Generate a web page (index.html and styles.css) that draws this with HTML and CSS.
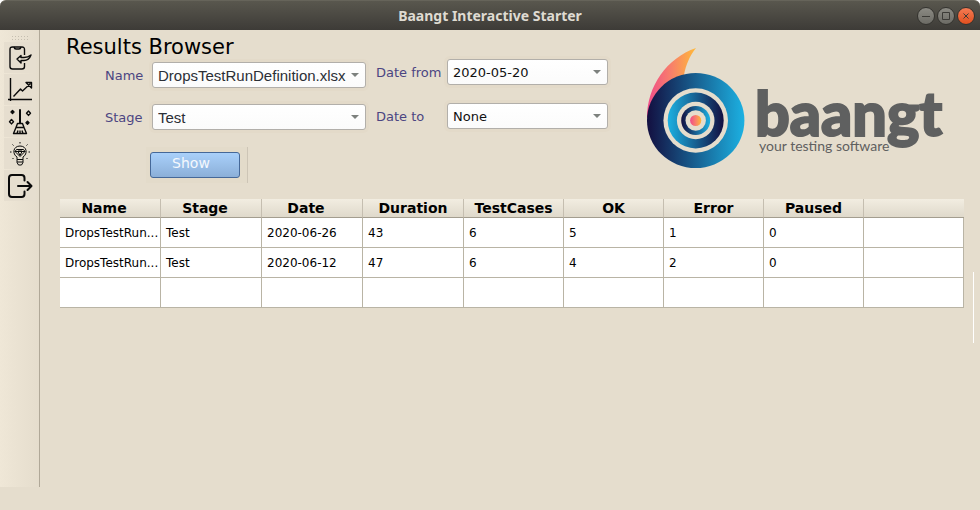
FILE: index.html
```html
<!DOCTYPE html>
<html lang="en">
<head>
<meta charset="utf-8">
<title>Baangt Interactive Starter</title>
<link rel="stylesheet" href="styles.css">
</head>
<body>
<header class="titlebar">
  <h1 class="titlebar-text">Baangt Interactive Starter</h1>
  <div class="window-controls">
    <button class="window-button" type="button" aria-label="Minimize"><svg viewBox="0 0 18 18"><path d="M5 9.500h8"/></svg></button>
    <button class="window-button" type="button" aria-label="Maximize"><svg viewBox="0 0 18 18"><path d="M5.500 5.500h7v7h-7z"/></svg></button>
    <button class="window-button window-close" type="button" aria-label="Close"><svg viewBox="0 0 18 18"><path d="M6.500 6.500l5 5M11.500 6.500l-5 5"/></svg></button>
  </div>
</header>
<div class="workspace">
  <nav class="toolbar" aria-label="Tools">
    <div class="grip"></div>
    <button class="tool" type="button" aria-label="Import">
      <svg viewBox="0 0 24 24"><path d="M16.500 9V3.500Q16.500 1 14 1H4.500Q2 1 2 3.500V20.500Q2 23 4.500 23H14Q16.500 23 16.500 20.500V17"/><path d="M6 1q.5 2 2 2h3q1.500 0 2-2"/><path d="M13 9.500L9 13l4 4v-2.500h3q5 0 7-5.500q-3 2.500-7 2.500h-3z"/></svg>
    </button>
    <button class="tool" type="button" aria-label="Statistics">
      <svg viewBox="0 0 24 24"><path d="M2.500 0v23M0 21.500h24M5.500 18.500l7-7.500 2 2L22.500 5.500M18 4.500h5.500V10z"/></svg>
    </button>
    <button class="tool" type="button" aria-label="Clean up">
      <svg viewBox="0 0 24 24"><path class="thick" d="M12 0v13"/><path d="M9.500 13.500h5l1.500 4H8zM8 17.500L5.500 23.500h13L16 17.500M9 23.500l1-3M12 23.500v-3M15 23.500l-1-3M3.500 9.500l2 2.200-2 2.200-2-2.200zM20.500 1l2 2.200-2 2.200-2-2.200z"/><path class="solid" d="M4.500.5l1.500 1.500-1.500 1.500L3 2zM19.500 11.200l1.500 1.500-1.500 1.500-1.500-1.500z"/></svg>
    </button>
    <button class="tool" type="button" aria-label="Ideas">
      <svg viewBox="0 0 24 24"><path class="thin" d="M9 17.500v-2.500C4 12 5 4 12 4s8 8 3 11v2.500zM9 17.500v3l1.500 2.500h3l1.500-2.500v-3M9 20h6M8.500 7.500h7l1.500 2-5 5-5-5zM7 9.500h10M10 9.500l2 4 2-4-2-2zM12 0v1.500M4.500 2.500l1 1M19.500 2.500l-1 1M2 10h1.500M20.500 10H22M4.500 17l1-1M19.500 17l-1-1"/></svg>
    </button>
    <button class="tool" type="button" aria-label="Exit">
      <svg viewBox="0 0 24 24"><path class="thick" d="M16.500 6.500V4Q16.500 1 13.500 1H4Q1 1 1 4V20Q1 23 4 23h9.500q3 0 3-3V17.500M10 12h13M19.500 8l4 4-4 4"/></svg>
    </button>
  </nav>
  <main class="content">
    <section class="filters">
      <div class="filter-area">
        <h2 class="heading">Results Browser</h2>
        <form class="form">
          <div class="fields fields-main">
            <div class="field"><label for="name">Name</label><span class="picker"><select id="name"><option>DropsTestRunDefinition.xlsx</option></select></span></div>
            <div class="field"><label for="stage">Stage</label><span class="picker"><select id="stage"><option>Test</option></select></span></div>
          </div>
          <div class="fields fields-date">
            <div class="field"><label for="date-from">Date from</label><span class="picker"><select id="date-from"><option>2020-05-20</option></select></span></div>
            <div class="field"><label for="date-to">Date to</label><span class="picker"><select id="date-to"><option>None</option></select></span></div>
          </div>
          <div class="actions"><button class="show" type="button">Show</button></div>
        </form>
      </div>
      <svg class="logo" viewBox="0 0 304 124" role="img" aria-label="baangt, your testing software">
        <defs>
          <linearGradient id="flame"><stop offset="0" stop-color="#ef4b8b"/><stop offset=".5" stop-color="#f8806a"/><stop offset="1" stop-color="#ffba38"/></linearGradient>
          <linearGradient id="ocean"><stop offset="0" stop-color="#130f40"/><stop offset="1" stop-color="#1cb1e2"/></linearGradient>
          <linearGradient id="ocean-back"><stop offset="0" stop-color="#1cb1e2"/><stop offset="1" stop-color="#130f40"/></linearGradient>
        </defs>
        <path fill="url(#flame)" d="M0 70C0 38 20 10 49 0C42 9 39 17 37 27L20 60z"/>
        <ellipse cx="48.700" cy="72.500" rx="48.700" ry="47.500" fill="url(#ocean)"/>
        <circle class="ring" cx="48.700" cy="72.500" r="32.300"/>
        <circle cx="48.700" cy="72.500" r="28" fill="url(#ocean-back)"/>
        <circle class="ring" cx="48.700" cy="72.500" r="18.800"/>
        <circle cx="48.700" cy="72.500" r="14.500" fill="url(#ocean)"/>
        <circle class="ring" cx="48.700" cy="72.500" r="10.200"/>
        <circle cx="48.700" cy="72.500" r="5.600" fill="url(#flame)"/>
        <text class="wordmark" x="108" y="88">baangt</text>
        <text class="tagline" x="112" y="103">your testing software</text>
      </svg>
    </section>
    <section class="results">
      <table class="table">
        <thead>
          <tr><th>Name</th><th>Stage</th><th>Date</th><th>Duration</th><th>TestCases</th><th>OK</th><th>Error</th><th>Paused</th><th></th></tr>
        </thead>
        <tbody>
          <tr><td>DropsTestRun...</td><td>Test</td><td>2020-06-26</td><td>43</td><td>6</td><td>5</td><td>1</td><td>0</td><td></td></tr>
          <tr><td>DropsTestRun...</td><td>Test</td><td>2020-06-12</td><td>47</td><td>6</td><td>4</td><td>2</td><td>0</td><td></td></tr>
          <tr><td></td><td></td><td></td><td></td><td></td><td></td><td></td><td></td><td></td></tr>
        </tbody>
      </table>
      <div class="scroll-mark"></div>
    </section>
  </main>
</div>
</body>
</html>
```
FILE: styles.css
```css
* { box-sizing: border-box; }

body {
  margin: 0;
  min-height: 100vh;
  display: flex;
  flex-direction: column;
  background: #e5ddcd;
  color: #000;
  font-family: "DejaVu Sans", sans-serif;
  font-size: 13px;
}

button, select { font: inherit; margin: 0; padding: 0; }

.titlebar {
  display: grid;
  grid-template-columns: 1fr auto 1fr;
  align-items: center;
  height: 30px;
  padding: 0 5px;
  border-top: 1px solid #66645a;
  border-radius: 6px 6px 0 0;
  background: linear-gradient(#59574e, #3d3b37);
  box-shadow: 0 0 0 6px #fff;
  clip-path: inset(0);
}

.titlebar-text {
  grid-column: 2;
  margin: 0;
  color: #dfdbd2;
  font: 700 14px/20px "Noto Sans", sans-serif;
}

.window-controls { display: flex; justify-content: flex-end; gap: 2px; }

.window-button {
  width: 18px;
  height: 18px;
  border: 1px solid #34332f;
  border-radius: 50%;
  background: linear-gradient(#8b8a83, #6c6b65);
}

.window-button svg {
  display: block;
  margin: -1px;
  width: 18px;
  height: 18px;
  fill: none;
  stroke: #3c3b37;
}

.window-close { background: linear-gradient(#f47b54, #e2501f); }

.workspace { flex: 1; display: flex; padding-bottom: 23px; }

.toolbar {
  display: flex;
  flex-direction: column;
  align-items: center;
  gap: 1px;
  width: 40px;
  padding: 5px 0;
  border-right: 1px solid #b0a898;
  background: linear-gradient(90deg, #efe7d7, #e5ddcd);
}

.grip {
  width: 18px;
  height: 6px;
  background: radial-gradient(circle, #c5beb0 1px, transparent 1px) 0 0 / 3px 3px;
}

.tool {
  width: 32px;
  height: 31px;
  border: 0;
  background: #e6decf;
}

.tool svg {
  display: block;
  margin: 0 auto;
  width: 24px;
  height: 24px;
  overflow: visible;
  fill: none;
  stroke: #0a0a0a;
  stroke-width: 1.4;
  stroke-linejoin: round;
}

.tool .thick { stroke-width: 2; stroke-linecap: round; }
.tool .thin { stroke-width: 1; }
.tool .solid { fill: #111; }

.content { flex: 1; min-width: 0; padding: 6px 6px 0 20px; }

.filters {
  display: flex;
  justify-content: space-between;
  height: 163px;
  padding-right: 23px;
}

.heading { margin: 0 6px; font-size: 21px; line-height: 22px; font-weight: 400; }

.form { display: grid; grid-template-columns: auto auto; justify-content: start; padding-left: 45px; column-gap: 10px; }

.fields { display: grid; align-content: start; color: #4b4582; }
.fields-main { gap: 16px; padding-top: 4px; }
.fields-date { gap: 18px; padding-top: 1px; }

.field { display: grid; align-items: center; }
.fields-main .field { grid-template-columns: 47px 214px; }
.fields-date .field { grid-template-columns: 71px 161px; }

.picker { position: relative; }

.picker::after {
  content: "";
  position: absolute;
  right: 7px;
  top: 11px;
  border: 4px solid transparent;
  border-top-color: #7d817e;
  border-bottom: 0;
  pointer-events: none;
}

.picker select {
  display: block;
  width: 100%;
  height: 26px;
  padding: 0 5px;
  appearance: none;
  border: 1px solid #b2afaa;
  border-radius: 3px;
  background: linear-gradient(#fff, #fbfbfb);
  box-shadow: 0 0 0 3px #e3dac9;
  color: #111;
}

.fields-main select { font: 15px "Liberation Sans", sans-serif; color: #2b2f36; }

.actions {
  width: 102px;
  margin: 17px 0 0 41px;
  padding: 5px 7px 5px 4px;
  border-right: 1px solid #cdc5b6;
  background: #e3dbca;
}

.show {
  display: block;
  width: 90px;
  height: 26px;
  padding: 0 8px 4px 0;
  border: 1px solid #456898;
  border-radius: 3px;
  background: linear-gradient(#a9d0fa, #8bafd8);
  color: #f4f8fd;
  font-size: 14px;
  line-height: 20px;
}

.logo { flex: none; width: 304px; height: 124px; margin-top: 12px; }
.ring { fill: #e5ddcd; }
.wordmark { font: 900 61px Lato, sans-serif; fill: #5f6060; stroke: #5f6060; stroke-width: 2; }
.tagline { font: 14px Lato, sans-serif; fill: #5f6060; }

.results { display: flex; align-items: flex-start; gap: 9px; }

.table { flex: 1; width: 100%; table-layout: fixed; border-collapse: separate; border-spacing: 0; }

.table th {
  height: 19px;
  padding: 0;
  border-right: 1px solid #c5beb0;
  border-bottom: 1px solid #a39d8f;
  background: linear-gradient(#f2ede1, #dfd9cb);
  font-size: 14px;
  line-height: 18px;
}

.table th:nth-child(-n+4) { width: 101px; }
.table th:nth-child(-n+3) { padding-right: 12px; }
.table th:last-child { border-right: 0; }

.table td {
  height: 30px;
  padding: 0 0 0 5px;
  border-right: 1px solid #b9b4a5;
  border-bottom: 1px solid #b9b4a5;
  background: #fff;
  font-size: 12px;
  white-space: nowrap;
}

.scroll-mark { width: 1px; height: 71px; margin-top: 73px; background: #fff; }
```
